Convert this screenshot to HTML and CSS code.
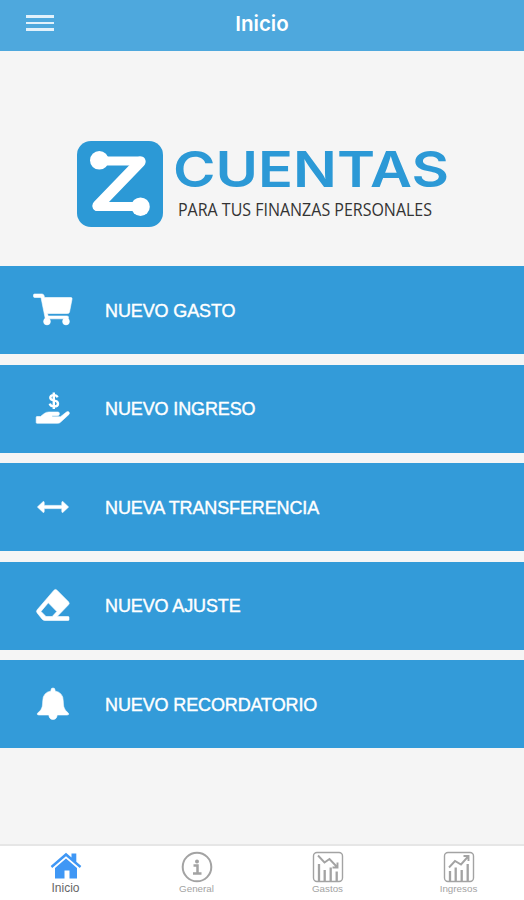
FILE: index.html
```html
<!DOCTYPE html>
<html lang="es">
<head>
    <meta charset="UTF-8">
    <meta name="viewport" content="width=device-width, initial-scale=1.0">
    <title>Z Cuentas - Inicio</title>
    <link rel="stylesheet" href="styles.css">
</head>
<body>
    <header class="topbar">
        <button class="btn-menu" aria-label="Menú"><span></span><span></span><span></span></button>
        <h1>Inicio</h1>
    </header>

    <main>
        <div class="logo">
            <svg class="logo-icon" viewBox="0 0 86 86">
                <rect width="86" height="86" rx="14" fill="#2c99d6"/>
                <g fill="none" stroke="#fff" stroke-linejoin="round" stroke-linecap="round">
                    <path d="M22 20H64L20 65.500H64" stroke-width="9"/>
                    <path d="M63 21L21 64.500" stroke-width="11"/>
                </g>
                <circle cx="22.300" cy="19.300" r="9.300" fill="#fff"/>
                <circle cx="63.500" cy="65.700" r="9.300" fill="#fff"/>
            </svg>
            <svg class="logo-texto" width="290" height="86">
                <text class="marca" x="-3" y="46" textLength="276" lengthAdjust="spacingAndGlyphs">CUENTAS</text>
                <text class="lema" x="2" y="75" textLength="254" lengthAdjust="spacingAndGlyphs">PARA TUS FINANZAS PERSONALES</text>
            </svg>
        </div>

        <div class="menu">
            <button class="opcion">
                <svg viewBox="0 0 40 40">
                    <path d="M1.500 4H9q1.500 0 2 1.500L11.500 7.500H38q1.500 0 1 1.800L36.500 22q-.4 1.500-2 1.500H14.500l.6 2.500H34q1.700 0 1.500 1.500l-.4 1.300H12.300L8 7.500H1.500Q.5 7.500.5 6V5Q.5 4 1.500 4Z"/>
                    <circle cx="14" cy="31.500" r="3.400"/>
                    <circle cx="33" cy="31.500" r="3.400"/>
                </svg>
                <span>NUEVO GASTO</span>
            </button>
            <button class="opcion">
                <svg viewBox="0 0 40 40">
                    <path class="peso" d="M24.500 8.300q-.7-2.200-3.700-2.200-3.500 0-3.500 2.600 0 2 3.700 2.700 4 .8 4 3.300 0 2.700-4 2.700-3.500 0-4.300-2.700M20.800 3.500V20"/>
                    <path d="M4 27.500h3.500l3.800-3q2-1.500 4.500-1.500h9q1.800 0 1.600 1.900-.2 1.800-1.900 1.800H19v1h8.500l6-4.700q1.600-1 2.500.1t-.1 2.400l-8.200 7.500q-1.200 1.300-3 1.300H4q-.8 0-.8-.8v-5.200q0-.8.8-.8Z"/>
                </svg>
                <span>NUEVO INGRESO</span>
            </button>
            <button class="opcion">
                <svg viewBox="0 0 40 40">
                    <path d="M4.400 20l5.600-5.300q1.200-.6 1.200.8v2.900h17.600v-2.900q0-1.400 1.200-.8l5.600 5.300-5.600 5.300q-1.200.6-1.200-.8v-2.900H11.200v2.900q0 1.400-1.200.8Z"/>
                </svg>
                <span>NUEVA TRANSFERENCIA</span>
            </button>
            <button class="opcion">
                <svg viewBox="0 0 40 40" fill-rule="evenodd">
                    <path d="M24 4.200l11.500 11.600q1.500 1.500 0 3L24.200 30.500h11q.8 0 .8.800v2.400q0 .8-.8.800H12q-1.500 0-2.600-1.100L4.200 27q-1.500-1.600 0-3.200L21 4.200q1.500-1.500 3 0ZM15.300 16.800L8 25.400l5 5.100h6.200l4.600-5Z"/>
                </svg>
                <span>NUEVO AJUSTE</span>
            </button>
            <button class="opcion">
                <svg viewBox="0 0 40 40">
                    <path d="M20 4q2 0 2 2v.9q8.200 1.800 8.200 9.600 0 7 2 9.500l3.300 3.300q.8 1.700-1.300 1.700h-10q-.5 4.500-4.200 4.500t-4.200-4.500H5.800q-2.100 0-1.300-1.700L7.800 26q2-2.500 2-9.500 0-7.800 8.200-9.600V6q0-2 2-2Z"/>
                </svg>
                <span>NUEVO RECORDATORIO</span>
            </button>
        </div>
    </main>

    <nav class="tabs">
        <a class="tab activo">
            <svg viewBox="0 0 32 32" fill="#3f97f5">
                <path d="M16 1.800L21.500 6.500V2.500h4.800v8.200l5 4.400-1.500 1.900L16 5.300 2.200 17 .7 15.100Z"/>
                <path d="M16 7.500L27 17v10.500H19.500v-8h-5v8H5V17Z"/>
            </svg>
            <span>Inicio</span>
        </a>
        <a class="tab">
            <svg viewBox="0 0 32 32" fill="none" stroke="#a3a3a3">
                <circle cx="16" cy="16" r="14.300" stroke-width="2"/>
                <circle cx="16" cy="10.500" r="2" fill="#a3a3a3" stroke="none"/>
                <path d="M12.500 14.500h4v8M12 22.500h8.500" stroke-width="2.500"/>
            </svg>
            <span>General</span>
        </a>
        <a class="tab">
            <svg viewBox="0 0 32 32" fill="none" stroke="#a3a3a3">
                <rect x="1.500" y="1.500" width="29" height="29" rx="3.500" stroke-width="1.400"/>
                <path d="M7 13v17M12.700 19v11M18.700 16.500v13.500M24.700 20.500v9.500" stroke-width="2.300"/>
                <path d="M6 4.500l6.500 7 5-3.500 8 8.500M25.500 11.500v5h-5" stroke-width="1.900"/>
            </svg>
            <span>Gastos</span>
        </a>
        <a class="tab">
            <svg viewBox="0 0 32 32" fill="none" stroke="#a3a3a3">
                <rect x="1.500" y="1.500" width="29" height="29" rx="3.500" stroke-width="1.400"/>
                <path d="M7 20v10M12.700 16.500v13.500M18.700 19v11M24.700 13v17" stroke-width="2.300"/>
                <path d="M6 16.500l6-6.500 6 3.500 7.500-8.500M20.500 5h5v5" stroke-width="1.900"/>
            </svg>
            <span>Ingresos</span>
        </a>
    </nav>
</body>
</html>
```
FILE: styles.css
```css
* {
    margin: 0;
    padding: 0;
    box-sizing: border-box;
}
body {
    height: 900px;
    display: flex;
    flex-direction: column;
    background-color: #f5f5f5;
    font-family: 'Liberation Sans', Arial, sans-serif;
    overflow: hidden;
}
button {
    border: none;
    background: none;
    font-family: inherit;
    cursor: pointer;
}
.topbar {
    height: 51px;
    display: grid;
    grid-template-columns: 80px 1fr 80px;
    align-items: center;
    padding-bottom: 5px;
    background: #4ea8dd;
}
.btn-menu {
    display: flex;
    flex-direction: column;
    gap: 4px;
    width: 28px;
    margin-left: 26px;
}
.btn-menu span {
    height: 2.5px;
    background: #e2f1fb;
}
.topbar h1 {
    color: #fff;
    font-family: Inter, sans-serif;
    font-size: 20.5px;
    font-weight: 600;
    text-align: center;
}
main {
    flex: 1;
}
.logo {
    display: flex;
    gap: 13px;
    height: 215px;
    padding: 90px 0 0 77px;
}
.logo-icon {
    width: 86px;
    height: 86px;
}
.logo-texto {
    overflow: visible;
}
.marca {
    fill: #2c99d6;
    font-family: Inter, sans-serif;
    font-size: 49px;
    font-weight: 600;
}
.lema {
    fill: #333;
    font-family: 'Open Sans', sans-serif;
    font-size: 17.5px;
}
.menu {
    display: flex;
    flex-direction: column;
    gap: 10.6px;
}
.opcion {
    display: flex;
    align-items: center;
    gap: 32px;
    width: 100%;
    height: 88px;
    padding-left: 33px;
    background: #339bd9;
    color: #fff;
    font-size: 18px;
    letter-spacing: -0.12px;
    -webkit-text-stroke: 0.4px #fff;
}
.opcion span {
    padding-top: 2px;
}
.opcion svg {
    width: 40px;
    height: 40px;
    fill: #fff;
    stroke: #fff;
    stroke-width: 0.6px;
}
.opcion .peso {
    fill: none;
    stroke-width: 2.4px;
}
.tabs {
    display: flex;
    height: 56px;
    border-top: 2px solid #e6e6e6;
    background: #fff;
}
.tab {
    flex: 1;
    display: flex;
    flex-direction: column;
    align-items: center;
    padding-top: 5px;
    color: #a3a3a3;
    font-size: 9.8px;
}
.tab svg {
    width: 32px;
    height: 32px;
}
.activo {
    color: #666;
    font-size: 12px;
}
.activo span {
    margin-top: -2px;
}
```
